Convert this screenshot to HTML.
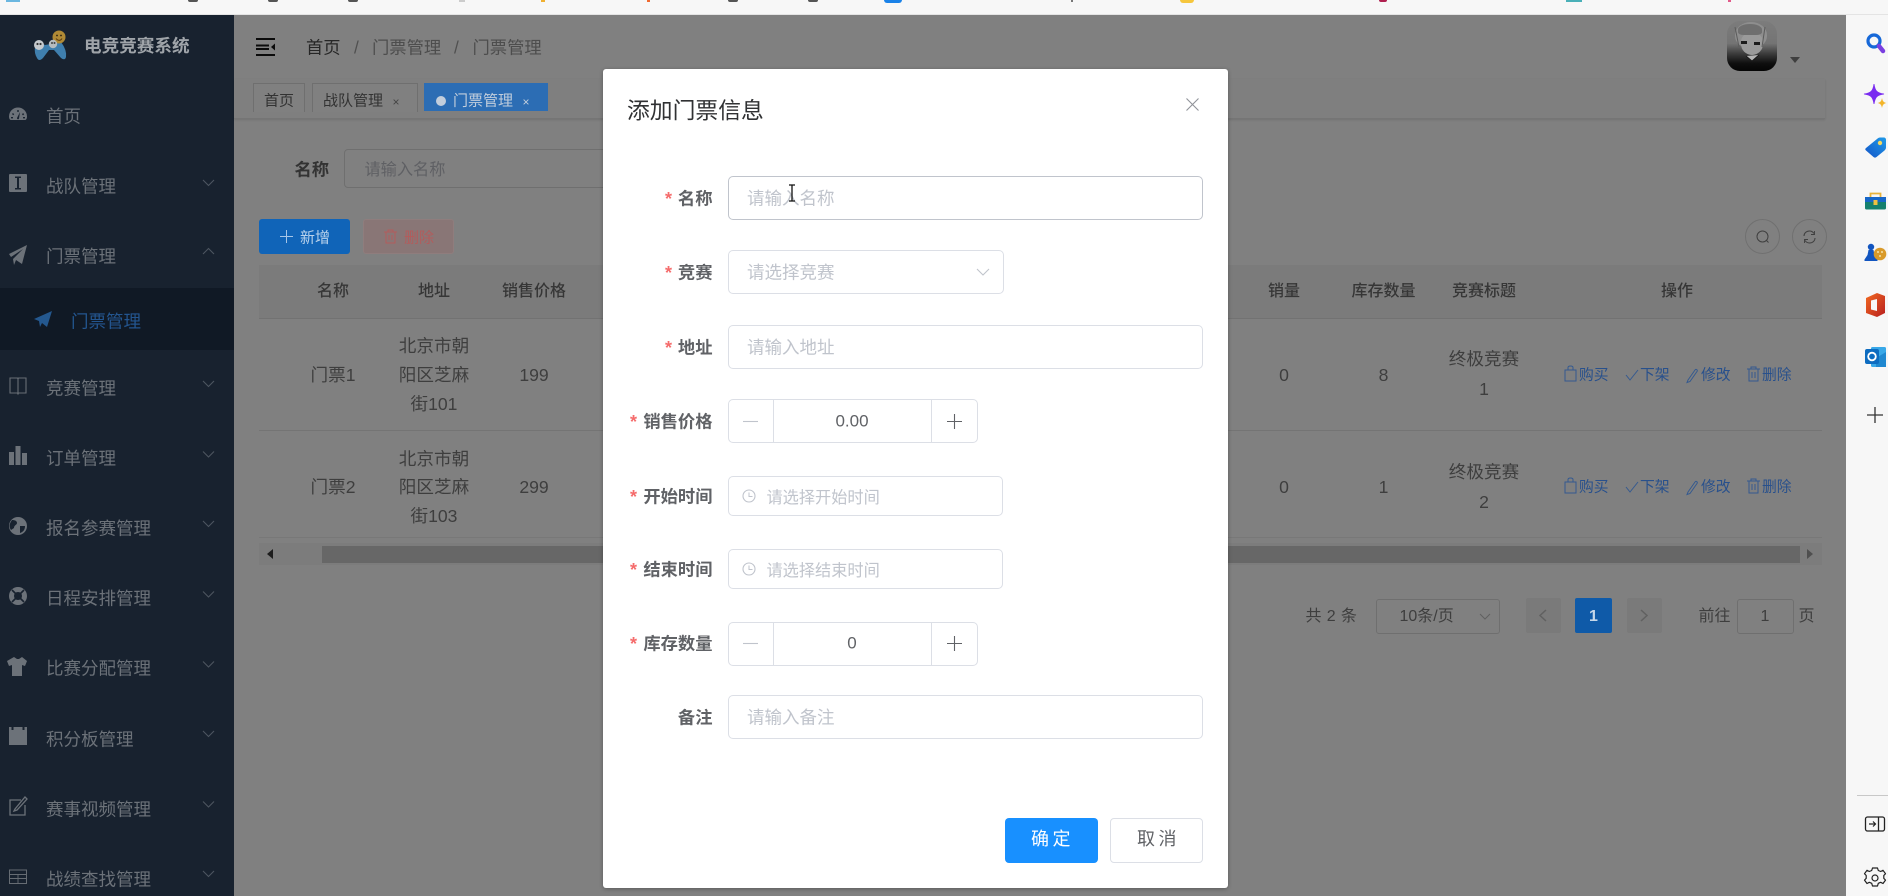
<!DOCTYPE html>
<html lang="zh-CN">
<head>
<meta charset="utf-8">
<title>电竞竞赛系统</title>
<style>
html,body{margin:0;padding:0;width:1888px;height:896px;overflow:hidden;background:#808080}
body{position:relative;font-family:"Liberation Sans","Noto Sans CJK SC",sans-serif;font-size:16px}
.a{position:absolute;box-sizing:border-box}
.t{position:absolute;white-space:nowrap;line-height:1;transform:translateY(calc(-50% + 1px))}
.c{position:absolute;white-space:nowrap;line-height:1;transform:translate(-50%,calc(-50% + 1px))}
.r{position:absolute;white-space:nowrap;line-height:1;transform:translate(-100%,calc(-50% + 1px))}
svg{position:absolute;overflow:visible}
.m{font-size:17.5px;color:#6c7279;left:46px}
.lb{font-size:17.3px;font-weight:700;color:#606266}
.st{color:#f56c6c;font-size:18px;font-weight:700}
.in{position:absolute;box-sizing:border-box;background:#fff;border:1px solid #dcdfe6;border-radius:5px}
.ph{font-size:17.5px;color:#c0c4cc}
.ph2{font-size:16.2px;color:#c0c4cc}
.th{font-size:16px;font-weight:500;color:#363636}
.td{font-size:17.6px;color:#3e3e3e}
.op{font-size:14.8px;color:#28508c}
.pg{font-size:16px;color:#3e3e3e}
</style>
</head>
<body>
<!-- browser top strip -->
<div class="a" style="left:0;top:0;width:1888px;height:15px;background:#f7f7f7;border-bottom:1px solid #e4e4e4"></div>
<div class="a" style="left:6px;top:0;width:14px;height:2px;background:#6bb7e0"></div>
<div class="a" style="left:188px;top:0;width:10px;height:2px;background:#555;border-radius:0 0 3px 3px"></div>
<div class="a" style="left:268px;top:0;width:10px;height:2px;background:#555;border-radius:0 0 3px 3px"></div>
<div class="a" style="left:348px;top:0;width:10px;height:2px;background:#555;border-radius:0 0 3px 3px"></div>
<div class="a" style="left:459px;top:0;width:6px;height:2px;background:#ccc"></div>
<div class="a" style="left:541px;top:0;width:4px;height:2px;background:#f0b030"></div>
<div class="a" style="left:647px;top:0;width:3px;height:2px;background:#f06a30"></div>
<div class="a" style="left:728px;top:0;width:10px;height:2px;background:#555;border-radius:0 0 3px 3px"></div>
<div class="a" style="left:808px;top:0;width:10px;height:2px;background:#555;border-radius:0 0 3px 3px"></div>
<div class="a" style="left:884px;top:0;width:18px;height:3px;background:#1a82e8;border-radius:0 0 4px 4px"></div>
<div class="a" style="left:1071px;top:0;width:2px;height:2px;background:#777"></div>
<div class="a" style="left:1180px;top:0;width:14px;height:3px;background:#f6c63c;border-radius:0 0 4px 4px"></div>
<div class="a" style="left:1379px;top:0;width:8px;height:2px;background:#b02050;border-radius:0 0 4px 4px"></div>
<div class="a" style="left:1566px;top:0;width:16px;height:2px;background:#4ab0b8"></div>
<div class="a" style="left:1728px;top:0;width:3px;height:2px;background:#e25a8a"></div>

<!-- right edge panel -->
<div class="a" style="left:1846px;top:15px;width:42px;height:881px;background:#f7f7f7"></div>
<div class="a" style="left:1857px;top:795px;width:31px;height:1px;background:#c8c8c8"></div>
<svg style="left:1846px;top:15px" width="42" height="881" viewBox="1846 15 42 881">
  <defs>
    <linearGradient id="go" x1="0" y1="0" x2="1" y2="1"><stop offset="0" stop-color="#f26a21"/><stop offset="1" stop-color="#b81f1f"/></linearGradient>
    <linearGradient id="gt" x1="0" y1="1" x2="1" y2="0"><stop offset="0" stop-color="#1455c8"/><stop offset="1" stop-color="#1f9ae8"/></linearGradient>
  </defs>
  <!-- search -->
  <circle cx="1874" cy="41" r="6" fill="none" stroke="#1668d8" stroke-width="3.200"/>
  <path d="M1879 46l4 5" stroke="#7a3fe0" stroke-width="4.500" stroke-linecap="round"/>
  <!-- sparkle -->
  <path d="M1874 84c1 7 3 9 10 10c-7 1-9 3-10 10c-1-7-3-9-10-10c7-1 9-3 10-10z" fill="#7a2cf0" stroke="#7a2cf0" stroke-width=".8"/>
  <path d="M1882 98c.6 3 1.500 4.400 4.500 5c-3 .6-3.900 2-4.500 5c-.6-3-1.500-4.400-4.500-5c3-.6 3.900-2 4.500-5z" fill="#f3b52b"/>
  <!-- tag -->
  <path d="M1866 148l11-9c1-1 2-1.500 3-1.500h4c1 0 2 1 2 2v8c0 1-.5 2-1.500 3l-8 6.500c-1 .8-2 .8-3 0l-7.500-6.500c-1-1-1-1.500 0-2.500z" fill="url(#gt)"/>
  <circle cx="1880" cy="143" r="2.200" fill="#f5d860"/>
  <!-- toolbox -->
  <rect x="1865" y="197" width="21" height="12.500" rx="1.500" fill="#15806e"/>
  <rect x="1865" y="197" width="21" height="5" fill="#1766c8"/>
  <path d="M1870.500 197v-3.500h10v3.500" fill="none" stroke="#e8b23a" stroke-width="1.800"/>
  <rect x="1873.500" y="200" width="4" height="5" fill="#f0c040"/>
  <!-- chess -->
  <circle cx="1871" cy="247" r="3.200" fill="#1255c0"/>
  <path d="M1868.500 250h5l1 5l3 4.500v1.500h-13v-1.500l3-4.500z" fill="#1255c0"/>
  <circle cx="1880" cy="254" r="6.300" fill="#d99a2a"/>
  <circle cx="1878" cy="252" r="1" fill="#f4e2a8"/><circle cx="1882" cy="252" r="1" fill="#f4e2a8"/><circle cx="1880" cy="256" r="1" fill="#f4e2a8"/>
  <!-- office -->
  <path d="M1866 298l11-5l8 3v17l-8 4l-11-4z" fill="url(#go)"/>
  <path d="M1871 300.500l6-1.500v12l-6-1.500z" fill="#f7f7f7"/>
  <!-- outlook -->
  <rect x="1871" y="347" width="15" height="20" rx="1.500" fill="#38a8e8"/>
  <path d="M1876 358l10-6v15h-10z" fill="#1f88d0"/>
  <rect x="1865" y="349" width="14" height="15" rx="2" fill="#0d6cc0"/>
  <circle cx="1872" cy="356.500" r="3.800" fill="none" stroke="#fff" stroke-width="1.800"/>
  <!-- plus -->
  <path d="M1867 415h16M1875 407v16" stroke="#333" stroke-width="1.300"/>
  <rect x="1865.500" y="817" width="19" height="14" rx="2" fill="none" stroke="#222" stroke-width="1.300"/>
  <path d="M1878.500 817v14" stroke="#222" stroke-width="1.300"/>
  <path d="M1869 824h6M1873 821.500l2.500 2.500l-2.500 2.500" fill="none" stroke="#222" stroke-width="1.200"/>
  <path d="M1872.500 868h5l.8 2.500l2.400 1l2.300-1.200l2.500 3.400l-1.700 1.800v2.800l1.700 1.800l-2.500 3.400l-2.300-1.200l-2.400 1l-.8 2.700h-5l-.8-2.700l-2.400-1l-2.300 1.200l-2.500-3.400l1.700-1.800v-2.800l-1.700-1.800l2.500-3.400l2.300 1.200l2.400-1z" fill="none" stroke="#222" stroke-width="1.200" stroke-linejoin="round"/>
  <circle cx="1875" cy="878" r="3" fill="none" stroke="#222" stroke-width="1.200"/>
</svg>

<!-- sidebar -->
<div class="a" style="left:0;top:15px;width:234px;height:881px;background:#18222f"></div>
<div class="a" style="left:0;top:288px;width:234px;height:62px;background:#101925"></div>
<svg style="left:28px;top:28px" width="44" height="36" viewBox="0 0 44 36">
  <path d="M7 19q4-6 10-2l6-1q4-6 10-2q6 8 5 15q-1 4-5 1l-7-8l-5 0l-6 8q-4 4-6 0q-3-5-2-11z" fill="#3f7fae"/>
  <circle cx="31" cy="9" r="6.500" fill="#b08a35"/>
  <circle cx="29" cy="7.500" r=".9" fill="#2a2010"/><circle cx="33" cy="7.500" r=".9" fill="#2a2010"/>
  <path d="M28 10.500c2 2.500 4.500 2.500 6 0" stroke="#5a3a10" fill="none"/>
  <circle cx="11" cy="17" r="5" fill="#c5c9cc"/><circle cx="9.500" cy="16" r="1.100" fill="#333"/><circle cx="12.500" cy="16" r="1.100" fill="#333"/>
  <circle cx="25" cy="16" r="4.200" fill="#b6bcc0"/><circle cx="24" cy="15" r="1" fill="#444"/><circle cx="26.500" cy="15" r="1" fill="#444"/>
</svg>
<div class="t" style="left:84px;top:46px;font-size:17.600px;font-weight:700;color:#9fa4a9">电竞竞赛系统</div>

<div class="t m" style="top:116px">首页</div>
<div class="t m" style="top:186px">战队管理</div>
<div class="t m" style="top:256px">门票管理</div>
<div class="t" style="left:71px;top:321px;font-size:17.500px;color:#23558f">门票管理</div>
<div class="t m" style="top:388px">竞赛管理</div>
<div class="t m" style="top:458px">订单管理</div>
<div class="t m" style="top:528px">报名参赛管理</div>
<div class="t m" style="top:598px">日程安排管理</div>
<div class="t m" style="top:668px">比赛分配管理</div>
<div class="t m" style="top:739px">积分板管理</div>
<div class="t m" style="top:809px">赛事视频管理</div>
<div class="t m" style="top:879px">战绩查找管理</div>

<svg style="left:0;top:0" width="234" height="896" viewBox="0 0 234 896">
  <g fill="#6c7279">
    <!-- gauge -->
    <path d="M9 116.500a9 9 0 1 1 18 0c0 1.800-.7 3.500-2 3.500h-14c-1.300 0-2-1.700-2-3.500z"/>
    <!-- info square -->
    <rect x="9" y="174" width="18" height="18" rx="1"/>
    <!-- plane -->
    <path d="M27 245l-5 19l-6-4l-2 5l-1-6l10-10l-12 8l-2-3z"/>
    <!-- bars -->
    <rect x="9" y="452" width="5" height="13"/><rect x="15.500" y="446" width="5" height="19"/><rect x="22" y="453" width="5" height="12"/>
    <!-- globe -->
    <circle cx="18" cy="526" r="9"/>
    <!-- shirt -->
    <path d="M14 657l3 2h2l3-2l5 4l-2 5l-3-1v11h-10v-11l-3 1l-2-5z"/>
    <!-- calendar -->
    <path d="M9 727h2.500v3h2v-3h9v3h2v-3h2.500v18h-18z"/>
  </g>
  <g fill="#18222f">
    <path d="M13 113l1.200 1.200l-1 1l-1.200-1.200zM23 113l1.200 1.200l-1.200 1.200l-1-1zM17.300 110h1.400v2h-1.400zM11 117h2v1.400h-2zM23 117h2v1.400h-2z"/>
    <path d="M17 118l3-6l-1 6.500a1 1 0 0 1-2-.5z"/>
    <rect x="15" y="176.500" width="6" height="1.500"/><rect x="15" y="188" width="6" height="1.500"/><rect x="17" y="178" width="2" height="10"/>
    <path d="M12 520c3 0 5 1 5 3s-3 2-3 5l-3 2c-2-3-2-6 1-10zM20 526l5 0c0 4-2 6-5 7z"/>
  </g>
  <path d="M10 378v15h7.500l.5 1l.5-1h7.500v-15h-7.500l-.5 1l-.5-1zM18 379v15" fill="none" stroke="#686e75" stroke-width="1.100"/>
  <circle cx="18" cy="596" r="6.500" fill="none" stroke="#6c7279" stroke-width="5"/>
  <path d="M12 590l3.500 3.500M24 590l-3.500 3.500M12 602l3.500-3.500M24 602l-3.500-3.500" stroke="#18222f" stroke-width="1.600"/>
  <path d="M21 800h-11v15h15v-10M15 809l10-12l2 2l-10 11l-3 1z" fill="none" stroke="#6c7279" stroke-width="1.300"/>
  <rect x="9.500" y="870" width="17" height="13.500" fill="none" stroke="#666c73" stroke-width="1"/>
  <path d="M9.500 874.500h17M9.500 878.500h17M18 874.500v8.500" stroke="#666c73" stroke-width=".9"/>
  <path d="M52 311l-5 16l-5-4l-2 4l-1-6l-5-2z" fill="#24588f"/>
  <g fill="none" stroke="#4d5660" stroke-width="1.100">
    <path d="M203 180l5.500 5.500l5.500-5.500"/>
    <path d="M203 254l5.500-5.500l5.500 5.500"/>
    <path d="M203 381l5.500 5.500l5.500-5.500"/>
    <path d="M203 451.500l5.500 5.500l5.500-5.500"/>
    <path d="M203 521l5.500 5.500l5.500-5.500"/>
    <path d="M203 591.500l5.500 5.500l5.500-5.500"/>
    <path d="M203 661.500l5.500 5.500l5.500-5.500"/>
    <path d="M203 731l5.500 5.500l5.500-5.500"/>
    <path d="M203 801.500l5.500 5.500l5.500-5.500"/>
    <path d="M203 871l5.500 5.500l5.500-5.500"/>
  </g>
</svg>

<!-- header -->
<svg style="left:256px;top:38px" width="20" height="18" viewBox="0 0 20 18">
  <path d="M0 1h19M0 7.500h13M0 11h13M0 17h19" stroke="#0b0b0b" stroke-width="2" fill="none"/>
  <path d="M19 5.500v7l-4-3.500z" fill="#0b0b0b"/>
</svg>
<div class="t" style="left:306px;top:46.500px;font-size:17.300px;color:#262626">首页</div>
<div class="t" style="left:354px;top:46.500px;font-size:17.300px;color:#505050">/</div>
<div class="t" style="left:372px;top:46.500px;font-size:17.300px;color:#4d4d4d">门票管理</div>
<div class="t" style="left:454px;top:46.500px;font-size:17.300px;color:#505050">/</div>
<div class="t" style="left:472.500px;top:46.500px;font-size:17.300px;color:#4d4d4d">门票管理</div>

<div class="a" style="left:1727px;top:21px;width:50px;height:50px;border-radius:13px;background:linear-gradient(180deg,#7c7c7c 0%,#747474 45%,#3a3a3a 66%,#0e0e0e 85%,#050505 100%);overflow:hidden">
  <div class="a" style="left:8px;top:1px;width:32px;height:26px;border-radius:50% 50% 45% 45%;background:#8e8e8e"></div>
  <div class="a" style="left:14px;top:12px;width:22px;height:22px;border-radius:40% 40% 50% 50%;background:#9a9a9a"></div>
  <div class="a" style="left:11px;top:3px;width:24px;height:11px;border-radius:60% 60% 30% 30%;background:#6f6f6f"></div>
  <div class="a" style="left:14px;top:20px;width:6px;height:3px;background:#1c1c1c"></div>
  <div class="a" style="left:27px;top:21px;width:6px;height:3px;background:#1c1c1c"></div>
  <svg style="left:0;top:0" width="50" height="50"><path d="M19 35l6 5l7-6" fill="#b4b4b4" stroke="#1a1a1a"/><path d="M8 6l4 20M38 6l-3 20" stroke="#5c5c5c" fill="none"/></svg>
</div>
<svg style="left:1790px;top:57px" width="10" height="7"><path d="M0 0h10l-5 6z" fill="#3f3f3f"/></svg>

<!-- tags bar -->
<div class="a" style="left:234px;top:79px;width:1591px;height:40px;background:#7f7f7f;border-bottom:1px solid #757575;box-shadow:0 1px 2px rgba(0,0,0,.12)"></div>
<div class="a" style="left:253px;top:83px;width:52px;height:29px;border:1px solid #6f6f6f;border-bottom:none;background:#808080"></div>
<div class="t" style="left:264px;top:100px;font-size:15px;color:#323232">首页</div>
<div class="a" style="left:312px;top:83px;width:106px;height:29px;border:1px solid #6f6f6f;border-bottom:none;background:#808080"></div>
<div class="t" style="left:323px;top:100px;font-size:15px;color:#323232">战队管理</div>
<div class="c" style="left:396px;top:101px;font-size:12px;color:#444">×</div>
<div class="a" style="left:424px;top:83px;width:124px;height:28px;background:#2c6db4"></div>
<div class="a" style="left:436px;top:96px;width:10px;height:10px;border-radius:50%;background:#c2cedc"></div>
<div class="t" style="left:453px;top:100px;font-size:15px;color:#c2cedc">门票管理</div>
<div class="c" style="left:526px;top:101px;font-size:12px;color:#c2cedc">×</div>

<!-- filter -->
<div class="t" style="left:294.500px;top:169px;font-size:17.300px;font-weight:700;color:#333">名称</div>
<div class="a" style="left:344px;top:149px;width:270px;height:39px;border:1px solid #6f6f6f;border-radius:4px"></div>
<div class="t" style="left:364.500px;top:169px;font-size:16.200px;color:#5f6064">请输入名称</div>

<div class="a" style="left:259px;top:219px;width:91px;height:35px;background:#1064b8;border-radius:3px"></div>
<svg style="left:280px;top:230px" width="13" height="13"><path d="M6.500 0v13M0 6.500h13" stroke="#a6c6e8" stroke-width="1"/></svg>
<div class="t" style="left:300px;top:236.500px;font-size:15px;color:#b9d2ec">新增</div>
<div class="a" style="left:363px;top:219px;width:91px;height:35px;background:#897676;border:1px solid #8f7d7d;border-radius:3px"></div>
<svg style="left:384px;top:229px" width="13" height="15" viewBox="0 0 13 15"><path d="M0 3h13M4 3v-2h5v2M2 3v11h9v-11M5 6v5M8 6v5" fill="none" stroke="#b25c5c" stroke-width="1"/></svg>
<div class="t" style="left:404px;top:236.500px;font-size:15px;color:#b25c5c">删除</div>

<div class="a" style="left:1745px;top:219px;width:35px;height:35px;border:1px solid #707070;border-radius:50%"></div>
<svg style="left:1756px;top:230px" width="14" height="14"><circle cx="6.500" cy="6.500" r="5.500" fill="none" stroke="#3f3f3f" stroke-width="1"/><path d="M10.500 10.500l2 2" stroke="#3f3f3f"/></svg>
<div class="a" style="left:1792px;top:219px;width:35px;height:35px;border:1px solid #707070;border-radius:50%"></div>
<svg style="left:1803px;top:230px" width="13" height="14" viewBox="0 0 13 14"><path d="M1 6c0-3 2.500-5 5.500-5c2 0 3.500 1 4.500 2.500M12 8c0 3-2.500 5-5.500 5c-2 0-3.500-1-4.500-2.500" fill="none" stroke="#3f3f3f"/><path d="M11.500 1v3.500h-3.500M1.500 13v-3.500h3.500" fill="none" stroke="#3f3f3f" stroke-width=".9"/></svg>

<!-- table -->
<div class="a" style="left:259px;top:265px;width:1563px;height:54px;background:#7b7b7b;border-bottom:1px solid #727272"></div>
<div class="c th" style="left:333px;top:291px">名称</div>
<div class="c th" style="left:434px;top:291px">地址</div>
<div class="c th" style="left:534px;top:291px">销售价格</div>
<div class="c th" style="left:1284px;top:291px">销量</div>
<div class="c th" style="left:1383.500px;top:291px">库存数量</div>
<div class="c th" style="left:1484px;top:291px">竞赛标题</div>
<div class="c th" style="left:1677px;top:291px">操作</div>

<div class="a" style="left:259px;top:430px;width:1563px;height:1px;background:#747474"></div>
<div class="a" style="left:259px;top:537px;width:1563px;height:1px;background:#787878"></div>

<div class="c td" style="left:333px;top:375px">门票1</div>
<div class="c td" style="left:434px;top:345.500px">北京市朝</div>
<div class="c td" style="left:434px;top:375px">阳区芝麻</div>
<div class="c td" style="left:434px;top:404px">街101</div>
<div class="c td" style="left:534px;top:375px">199</div>
<div class="c td" style="left:1284px;top:375px">0</div>
<div class="c td" style="left:1383.500px;top:375px">8</div>
<div class="c td" style="left:1484px;top:359px">终极竞赛</div>
<div class="c td" style="left:1484px;top:389px">1</div>

<div class="c td" style="left:333px;top:487px">门票2</div>
<div class="c td" style="left:434px;top:458.500px">北京市朝</div>
<div class="c td" style="left:434px;top:487px">阳区芝麻</div>
<div class="c td" style="left:434px;top:515.500px">街103</div>
<div class="c td" style="left:534px;top:487px">299</div>
<div class="c td" style="left:1284px;top:487px">0</div>
<div class="c td" style="left:1383.500px;top:487px">1</div>
<div class="c td" style="left:1484px;top:472px">终极竞赛</div>
<div class="c td" style="left:1484px;top:502px">2</div>

<div class="t op" style="left:1579px;top:374.500px">购买</div>
<div class="t op" style="left:1640px;top:374.500px">下架</div>
<div class="t op" style="left:1701px;top:374.500px">修改</div>
<div class="t op" style="left:1762px;top:374.500px">删除</div>
<div class="t op" style="left:1579px;top:486.500px">购买</div>
<div class="t op" style="left:1640px;top:486.500px">下架</div>
<div class="t op" style="left:1701px;top:486.500px">修改</div>
<div class="t op" style="left:1762px;top:486.500px">删除</div>
<svg style="left:0;top:0" width="1846" height="896" viewBox="0 0 1846 896">
  <g fill="none" stroke="#34598f" stroke-width="1">
    <g>
      <path d="M1565 370h11v11h-11zM1568 370v-2.500c0-2 5-2 5 0v2.500"/>
      <path d="M1626 375l4 5l8-10"/>
      <path d="M1688 380l7-10c1-1.500 3 0 2 1.500l-7 10l-3 1z"/>
      <path d="M1747 369h13M1751 369v-2h5v2M1749 369v12h9v-12M1752 372v6M1755 372v6"/>
    </g>
    <g transform="translate(0,112)">
      <path d="M1565 370h11v11h-11zM1568 370v-2.500c0-2 5-2 5 0v2.500"/>
      <path d="M1626 375l4 5l8-10"/>
      <path d="M1688 380l7-10c1-1.500 3 0 2 1.500l-7 10l-3 1z"/>
      <path d="M1747 369h13M1751 369v-2h5v2M1749 369v12h9v-12M1752 372v6M1755 372v6"/>
    </g>
  </g>
</svg>

<!-- scrollbar -->
<div class="a" style="left:259px;top:543px;width:1563px;height:22px;background:#7c7c7c"></div>
<div class="a" style="left:321.500px;top:546px;width:1478.500px;height:17px;background:#676767"></div>
<svg style="left:267px;top:549px" width="6" height="10"><path d="M6 0v10l-6-5z" fill="#1d1d1d"/></svg>
<svg style="left:1807px;top:549px" width="6" height="10"><path d="M0 0v10l6-5z" fill="#4f4f4f"/></svg>

<!-- pagination -->
<div class="t pg" style="left:1305.500px;top:616px;letter-spacing:.4px">共 2 条</div>
<div class="a" style="left:1375.500px;top:599px;width:124px;height:35px;border:1px solid #6f6f6f;border-radius:3px"></div>
<div class="t pg" style="left:1399.500px;top:616px">10条/页</div>
<svg style="left:1479px;top:613px" width="12" height="7"><path d="M1 1l5 5l5-5" fill="none" stroke="#606060"/></svg>
<div class="a" style="left:1526px;top:598px;width:35px;height:35px;background:#7a7a7a;border-radius:2px"></div>
<svg style="left:1539px;top:609px" width="8" height="13"><path d="M7 1l-6 5.500l6 5.500" fill="none" stroke="#616161" stroke-width="1.500"/></svg>
<div class="a" style="left:1575px;top:598px;width:37px;height:35px;background:#0f5aa8;border-radius:2px"></div>
<div class="c" style="left:1593.500px;top:616px;font-size:16px;font-weight:700;color:#c6d8ea">1</div>
<div class="a" style="left:1626.500px;top:598px;width:35px;height:35px;background:#7a7a7a;border-radius:2px"></div>
<svg style="left:1640px;top:609px" width="8" height="13"><path d="M1 1l6 5.500l-6 5.500" fill="none" stroke="#616161" stroke-width="1.500"/></svg>
<div class="t pg" style="left:1698.500px;top:616px">前往</div>
<div class="a" style="left:1736.500px;top:599px;width:57px;height:35px;border:1px solid #6f6f6f;border-radius:3px"></div>
<div class="c pg" style="left:1765px;top:616px">1</div>
<div class="t pg" style="left:1798.500px;top:616px">页</div>

<!-- modal -->
<div class="a" style="left:603px;top:69px;width:625px;height:819px;background:#fff;border-radius:3px;box-shadow:0 1px 4px rgba(0,0,0,.3)"></div>
<div class="t" style="left:627px;top:110px;font-size:22.800px;color:#303133">添加门票信息</div>
<svg style="left:1186px;top:98px" width="13" height="13"><path d="M.5 .5l12 12M12.500 .5l-12 12" stroke="#909399" stroke-width="1.100"/></svg>

<div class="r lb" style="left:712.500px;top:198px">名称</div><div class="t st" style="left:665px;top:198px">*</div>
<div class="in" style="left:728px;top:176px;width:475px;height:44px;border-color:#c0c4cc"></div>
<div class="t ph" style="left:747px;top:198px">请输入名称</div>
<svg style="left:787px;top:184px" width="10" height="18"><path d="M2 1h6M2 17h6M5 1v16" stroke="#111" stroke-width="1.300" fill="none"/></svg>

<div class="r lb" style="left:712.500px;top:272px">竞赛</div><div class="t st" style="left:665px;top:272px">*</div>
<div class="in" style="left:728px;top:250px;width:276px;height:44px"></div>
<div class="t ph" style="left:747px;top:272px">请选择竞赛</div>
<svg style="left:976px;top:268px" width="14" height="8"><path d="M1 1l6 6l6-6" fill="none" stroke="#c0c4cc" stroke-width="1.100"/></svg>

<div class="r lb" style="left:712.500px;top:347px">地址</div><div class="t st" style="left:665px;top:347px">*</div>
<div class="in" style="left:728px;top:325px;width:475px;height:44px"></div>
<div class="t ph" style="left:747px;top:347px">请输入地址</div>

<div class="r lb" style="left:712.500px;top:421px">销售价格</div><div class="t st" style="left:630px;top:421px">*</div>
<div class="in" style="left:728px;top:399px;width:250px;height:44px"></div>
<div class="a" style="left:773px;top:400px;width:1px;height:42px;background:#dcdfe6"></div>
<div class="a" style="left:931px;top:400px;width:1px;height:42px;background:#dcdfe6"></div>
<svg style="left:743px;top:414px" width="15" height="15"><path d="M0 7.500h15" stroke="#c0c4cc" stroke-width="1.100"/></svg>
<svg style="left:947px;top:414px" width="15" height="15"><path d="M0 7.500h15M7.500 0v15" stroke="#606266" stroke-width="1.100"/></svg>
<div class="c" style="left:852px;top:420px;font-size:17px;color:#606266">0.00</div>

<div class="r lb" style="left:712.500px;top:496px">开始时间</div><div class="t st" style="left:630px;top:496px">*</div>
<div class="in" style="left:728px;top:476px;width:275px;height:40px"></div>
<svg style="left:742px;top:489px" width="14" height="14"><circle cx="7" cy="7" r="6" fill="none" stroke="#c0c4cc" stroke-width="1.100"/><path d="M7 3.500v4h3.500" fill="none" stroke="#c0c4cc"/></svg>
<div class="t ph2" style="left:766.500px;top:496.500px">请选择开始时间</div>

<div class="r lb" style="left:712.500px;top:569px">结束时间</div><div class="t st" style="left:630px;top:569px">*</div>
<div class="in" style="left:728px;top:549px;width:275px;height:40px"></div>
<svg style="left:742px;top:562px" width="14" height="14"><circle cx="7" cy="7" r="6" fill="none" stroke="#c0c4cc" stroke-width="1.100"/><path d="M7 3.500v4h3.500" fill="none" stroke="#c0c4cc"/></svg>
<div class="t ph2" style="left:766.500px;top:569.500px">请选择结束时间</div>

<div class="r lb" style="left:712.500px;top:643px">库存数量</div><div class="t st" style="left:630px;top:643px">*</div>
<div class="in" style="left:728px;top:622px;width:250px;height:44px"></div>
<div class="a" style="left:773px;top:623px;width:1px;height:42px;background:#dcdfe6"></div>
<div class="a" style="left:931px;top:623px;width:1px;height:42px;background:#dcdfe6"></div>
<svg style="left:743px;top:636px" width="15" height="15"><path d="M0 7.500h15" stroke="#c0c4cc" stroke-width="1.100"/></svg>
<svg style="left:947px;top:636px" width="15" height="15"><path d="M0 7.500h15M7.500 0v15" stroke="#606266" stroke-width="1.100"/></svg>
<div class="c" style="left:852px;top:642px;font-size:17px;color:#606266">0</div>

<div class="r lb" style="left:712.500px;top:717px">备注</div>
<div class="in" style="left:728px;top:695px;width:475px;height:44px"></div>
<div class="t ph" style="left:747px;top:717px">请输入备注</div>

<div class="a" style="left:1005px;top:818px;width:93px;height:45px;background:#1890ff;border-radius:4px"></div>
<div class="c" style="left:1052.500px;top:838px;font-size:18px;color:#fff;letter-spacing:3.500px">确定</div>
<div class="a" style="left:1110px;top:818px;width:93px;height:45px;background:#fff;border:1px solid #dcdfe6;border-radius:4px"></div>
<div class="c" style="left:1158.500px;top:838px;font-size:18px;color:#606266;letter-spacing:3.500px">取消</div>
</body>
</html>
